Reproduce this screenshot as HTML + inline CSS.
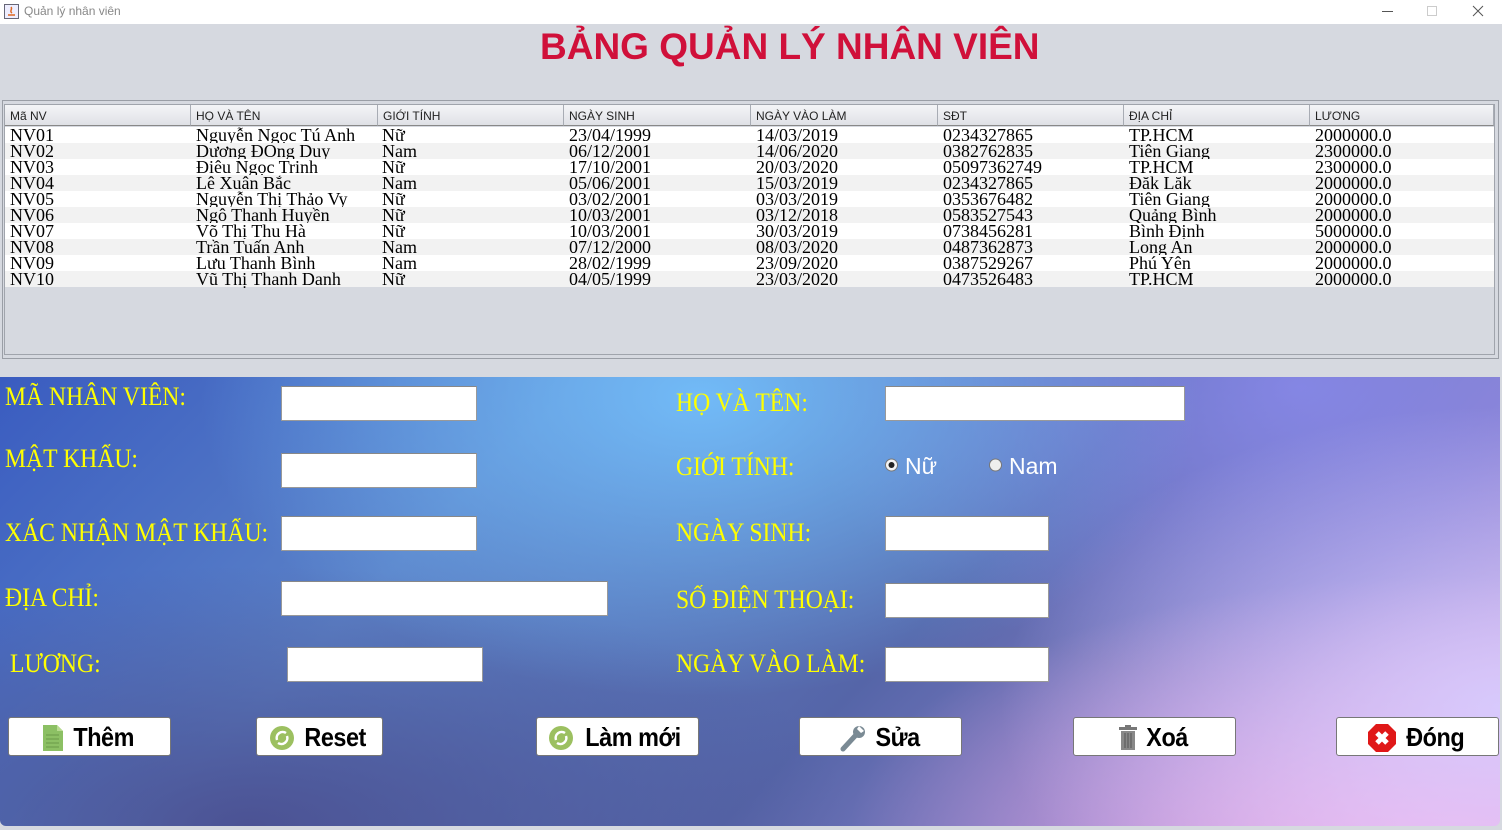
<!DOCTYPE html>
<html><head><meta charset="utf-8"><style>
*{margin:0;padding:0;box-sizing:border-box}
body{width:1502px;height:830px;overflow:hidden;background:#d6d9e0;position:relative;font-family:"Liberation Sans",sans-serif}
.abs{position:absolute}
#tb{left:0;top:0;width:1502px;height:24px;background:#fff}
#title{left:540px;top:26px;white-space:nowrap;font:bold 37px "Liberation Sans",sans-serif;color:#d0103a}
#tbl{left:2px;top:100px;width:1497px;height:259px;border:1px solid #9a9ea6;background:#d6d9e0}
#inner{left:1px;top:3px;width:1491px;height:251px;border:1px solid #a0a4ac}
.hd{position:absolute;top:0;height:21px;background:linear-gradient(#f4f5f7,#dfe1e6);border-right:1px solid #a8acb4;border-bottom:1px solid #888;font-size:12px;color:#222;padding:4px 0 0 5px}
.row{position:absolute;left:0;width:1489px;height:16px;font:18px/16px "Liberation Serif",serif;color:#000}
.row span{position:absolute;top:0}
#panel{left:0;top:377px;width:1500px;height:449px;border-radius:0 0 6px 6px;overflow:hidden;
background:
radial-gradient(ellipse 500px 300px at 700px 20px,rgba(115,190,250,0.95),rgba(115,190,250,0) 100%),
radial-gradient(ellipse 500px 300px at 1500px 330px,rgba(215,205,255,0.9),rgba(215,205,255,0) 100%),
radial-gradient(ellipse 600px 250px at 1450px 449px,rgba(245,175,232,1),rgba(245,175,232,0) 100%),
radial-gradient(ellipse 500px 300px at 1300px 10px,rgba(140,140,240,0.8),rgba(140,140,240,0) 100%),
radial-gradient(ellipse 600px 260px at 250px 449px,rgba(75,80,145,0.95),rgba(75,80,145,0) 100%),
linear-gradient(135deg,#3a5cc0 0%,#5b82c8 30%,#5565a8 60%,#8a80c8 80%,#d9a8e0 100%)}
.lb{position:absolute;color:#ffff00;font:26px "Liberation Serif",serif;transform:scaleX(0.91);transform-origin:0 0;white-space:nowrap}
.in{position:absolute;background:#fff;border:1px solid #999;border-top-color:#888;height:35px}
.btn{position:absolute;top:340px;height:39px;background:#fff;border:1px solid #777;border-radius:3px;display:flex;align-items:center;justify-content:center;font:bold 26px "Liberation Sans",sans-serif;color:#000;gap:6px;letter-spacing:-0.5px;padding-top:2px}
.btn b{display:inline-block;transform:scaleX(0.9)}
</style></head><body>
<div id="tb" class="abs">
<svg class="abs" style="left:4px;top:4px" width="15" height="15"><rect x="0.5" y="0.5" width="14" height="14" fill="#eef" stroke="#667"/><path d="M4 11h7M7 3c2 2-2 4 1 6" stroke="#d62" fill="none" stroke-width="1.5"/></svg>
<div class="abs" style="left:24px;top:4px;font-size:12px;color:#888">Quản lý nhân viên</div>
<div class="abs" style="left:1382px;top:11px;width:11px;height:1px;background:#555"></div>
<div class="abs" style="left:1427px;top:6px;width:10px;height:10px;border:1px solid #ccc"></div>
<svg class="abs" style="left:1472px;top:5px" width="12" height="12"><path d="M1 1L11 11M11 1L1 11" stroke="#555"/></svg>
</div>
<div id="title" class="abs">BẢNG QUẢN LÝ NHÂN VIÊN</div>
<div id="tbl" class="abs"><div id="inner" class="abs">
<div class="hd" style="left:0;width:186px">Mã NV</div>
<div class="hd" style="left:186px;width:187px">HỌ VÀ TÊN</div>
<div class="hd" style="left:373px;width:186px">GIỚI TÍNH</div>
<div class="hd" style="left:559px;width:187px">NGÀY SINH</div>
<div class="hd" style="left:746px;width:187px">NGÀY VÀO LÀM</div>
<div class="hd" style="left:933px;width:186px">SĐT</div>
<div class="hd" style="left:1119px;width:186px">ĐỊA CHỈ</div>
<div class="hd" style="left:1305px;width:184px">LƯƠNG</div>
<div style="position:absolute;left:0;top:22px">
<div class="row" style="top:0;background:#fff"><span style="left:5px">NV01</span><span style="left:191px">Nguyễn Ngọc Tú Anh</span><span style="left:377px">Nữ</span><span style="left:564px">23/04/1999</span><span style="left:751px">14/03/2019</span><span style="left:938px">0234327865</span><span style="left:1124px">TP.HCM</span><span style="left:1310px">2000000.0</span></div>
<div class="row" style="top:16px;background:#f2f2f2"><span style="left:5px">NV02</span><span style="left:191px">Dương ĐOng Duy</span><span style="left:377px">Nam</span><span style="left:564px">06/12/2001</span><span style="left:751px">14/06/2020</span><span style="left:938px">0382762835</span><span style="left:1124px">Tiên Giang</span><span style="left:1310px">2300000.0</span></div>
<div class="row" style="top:32px;background:#fff"><span style="left:5px">NV03</span><span style="left:191px">Điêu Ngọc Trinh</span><span style="left:377px">Nữ</span><span style="left:564px">17/10/2001</span><span style="left:751px">20/03/2020</span><span style="left:938px">05097362749</span><span style="left:1124px">TP.HCM</span><span style="left:1310px">2300000.0</span></div>
<div class="row" style="top:48px;background:#f2f2f2"><span style="left:5px">NV04</span><span style="left:191px">Lê Xuân Bắc</span><span style="left:377px">Nam</span><span style="left:564px">05/06/2001</span><span style="left:751px">15/03/2019</span><span style="left:938px">0234327865</span><span style="left:1124px">Đăk Lăk</span><span style="left:1310px">2000000.0</span></div>
<div class="row" style="top:64px;background:#fff"><span style="left:5px">NV05</span><span style="left:191px">Nguyễn Thị Thảo Vy</span><span style="left:377px">Nữ</span><span style="left:564px">03/02/2001</span><span style="left:751px">03/03/2019</span><span style="left:938px">0353676482</span><span style="left:1124px">Tiên Giang</span><span style="left:1310px">2000000.0</span></div>
<div class="row" style="top:80px;background:#f2f2f2"><span style="left:5px">NV06</span><span style="left:191px">Ngô Thanh Huyền</span><span style="left:377px">Nữ</span><span style="left:564px">10/03/2001</span><span style="left:751px">03/12/2018</span><span style="left:938px">0583527543</span><span style="left:1124px">Quảng Bình</span><span style="left:1310px">2000000.0</span></div>
<div class="row" style="top:96px;background:#fff"><span style="left:5px">NV07</span><span style="left:191px">Võ Thị Thu Hà</span><span style="left:377px">Nữ</span><span style="left:564px">10/03/2001</span><span style="left:751px">30/03/2019</span><span style="left:938px">0738456281</span><span style="left:1124px">Bình Định</span><span style="left:1310px">5000000.0</span></div>
<div class="row" style="top:112px;background:#f2f2f2"><span style="left:5px">NV08</span><span style="left:191px">Trần Tuấn Anh</span><span style="left:377px">Nam</span><span style="left:564px">07/12/2000</span><span style="left:751px">08/03/2020</span><span style="left:938px">0487362873</span><span style="left:1124px">Long An</span><span style="left:1310px">2000000.0</span></div>
<div class="row" style="top:128px;background:#fff"><span style="left:5px">NV09</span><span style="left:191px">Lưu Thanh Bình</span><span style="left:377px">Nam</span><span style="left:564px">28/02/1999</span><span style="left:751px">23/09/2020</span><span style="left:938px">0387529267</span><span style="left:1124px">Phú Yên</span><span style="left:1310px">2000000.0</span></div>
<div class="row" style="top:144px;background:#f2f2f2"><span style="left:5px">NV10</span><span style="left:191px">Vũ Thị Thanh Danh</span><span style="left:377px">Nữ</span><span style="left:564px">04/05/1999</span><span style="left:751px">23/03/2020</span><span style="left:938px">0473526483</span><span style="left:1124px">TP.HCM</span><span style="left:1310px">2000000.0</span></div>
</div></div></div>

<div id="panel" class="abs">
<div class="lb" style="left:5px;top:5px">MÃ NHÂN VIÊN:</div>
<div class="lb" style="left:5px;top:67px">MẬT KHẨU:</div>
<div class="lb" style="left:5px;top:141px">XÁC NHẬN MẬT KHẨU:</div>
<div class="lb" style="left:5px;top:206px">ĐỊA CHỈ:</div>
<div class="lb" style="left:10px;top:272px">LƯƠNG:</div>
<div class="in" style="left:281px;top:9px;width:196px"></div>
<div class="in" style="left:281px;top:76px;width:196px"></div>
<div class="in" style="left:281px;top:139px;width:196px"></div>
<div class="in" style="left:281px;top:204px;width:327px"></div>
<div class="in" style="left:287px;top:270px;width:196px"></div>

<div class="lb" style="left:676px;top:11px">HỌ VÀ TÊN:</div>
<div class="lb" style="left:676px;top:75px">GIỚI TÍNH:</div>
<div class="lb" style="left:676px;top:141px">NGÀY SINH:</div>
<div class="lb" style="left:676px;top:208px">SỐ ĐIỆN THOẠI:</div>
<div class="lb" style="left:676px;top:272px">NGÀY VÀO LÀM:</div>
<div class="in" style="left:885px;top:9px;width:300px"></div>
<div class="in" style="left:885px;top:139px;width:164px"></div>
<div class="in" style="left:885px;top:206px;width:164px"></div>
<div class="in" style="left:885px;top:270px;width:164px"></div>
<svg class="abs" style="left:884px;top:80px" width="16" height="16"><circle cx="7.5" cy="8" r="6" fill="#f4f4f4" stroke="#777"/><circle cx="7.5" cy="8" r="3" fill="#222"/></svg>
<div class="abs" style="left:905px;top:76px;font-size:23px;color:#fff">Nữ</div>
<svg class="abs" style="left:988px;top:80px" width="16" height="16"><circle cx="7.5" cy="8" r="6" fill="#eee" stroke="#777"/></svg>
<div class="abs" style="left:1009px;top:76px;font-size:23px;color:#fff">Nam</div>

<div class="btn" style="left:8px;width:163px"><svg width="22" height="28" viewBox="0 0 22 28"><path d="M1 1h14l6 6v20H1z" fill="#8cc064"/><path d="M15 1v6h6" fill="#b8dc90"/><path d="M4 11h13M4 15h13M4 19h13M4 23h13" stroke="#6a9a48"/></svg><b>Thêm</b></div>
<div class="btn" style="left:256px;width:127px"><svg width="26" height="26"><circle cx="13" cy="13" r="12" fill="#9cc060"/><path d="M8 15a6 6 0 0 1 9-7M18 11a6 6 0 0 1-9 7" stroke="#fff" stroke-width="2.5" fill="none"/></svg><b>Reset</b></div>
<div class="btn" style="left:536px;width:163px"><svg width="26" height="26"><circle cx="13" cy="13" r="12" fill="#9cc060"/><path d="M8 15a6 6 0 0 1 9-7M18 11a6 6 0 0 1-9 7" stroke="#fff" stroke-width="2.5" fill="none"/></svg><b>Làm mới</b></div>
<div class="btn" style="left:799px;width:163px"><svg width="28" height="28"><path d="M4 25L16 12" stroke="#7a8a94" stroke-width="5" stroke-linecap="round"/><circle cx="20" cy="8" r="6" fill="#7a8a94"/><path d="M20 2l5 5-3 2-4-4z" fill="#fff"/></svg><b>Sửa</b></div>
<div class="btn" style="left:1073px;width:163px"><svg width="20" height="26"><rect x="1" y="2" width="18" height="3" fill="#777"/><rect x="7" y="0" width="6" height="3" fill="#777"/><rect x="3" y="6" width="14" height="19" fill="#888"/><path d="M7 8v15M10 8v15M13 8v15" stroke="#555"/></svg><b>Xoá</b></div>
<div class="btn" style="left:1336px;width:163px"><svg width="30" height="30"><polygon points="9,1 21,1 29,9 29,21 21,29 9,29 1,21 1,9" fill="#e01818"/><path d="M10 10L20 20M20 10L10 20" stroke="#fff" stroke-width="5"/></svg><b>Đóng</b></div>
</div>
</body></html>
